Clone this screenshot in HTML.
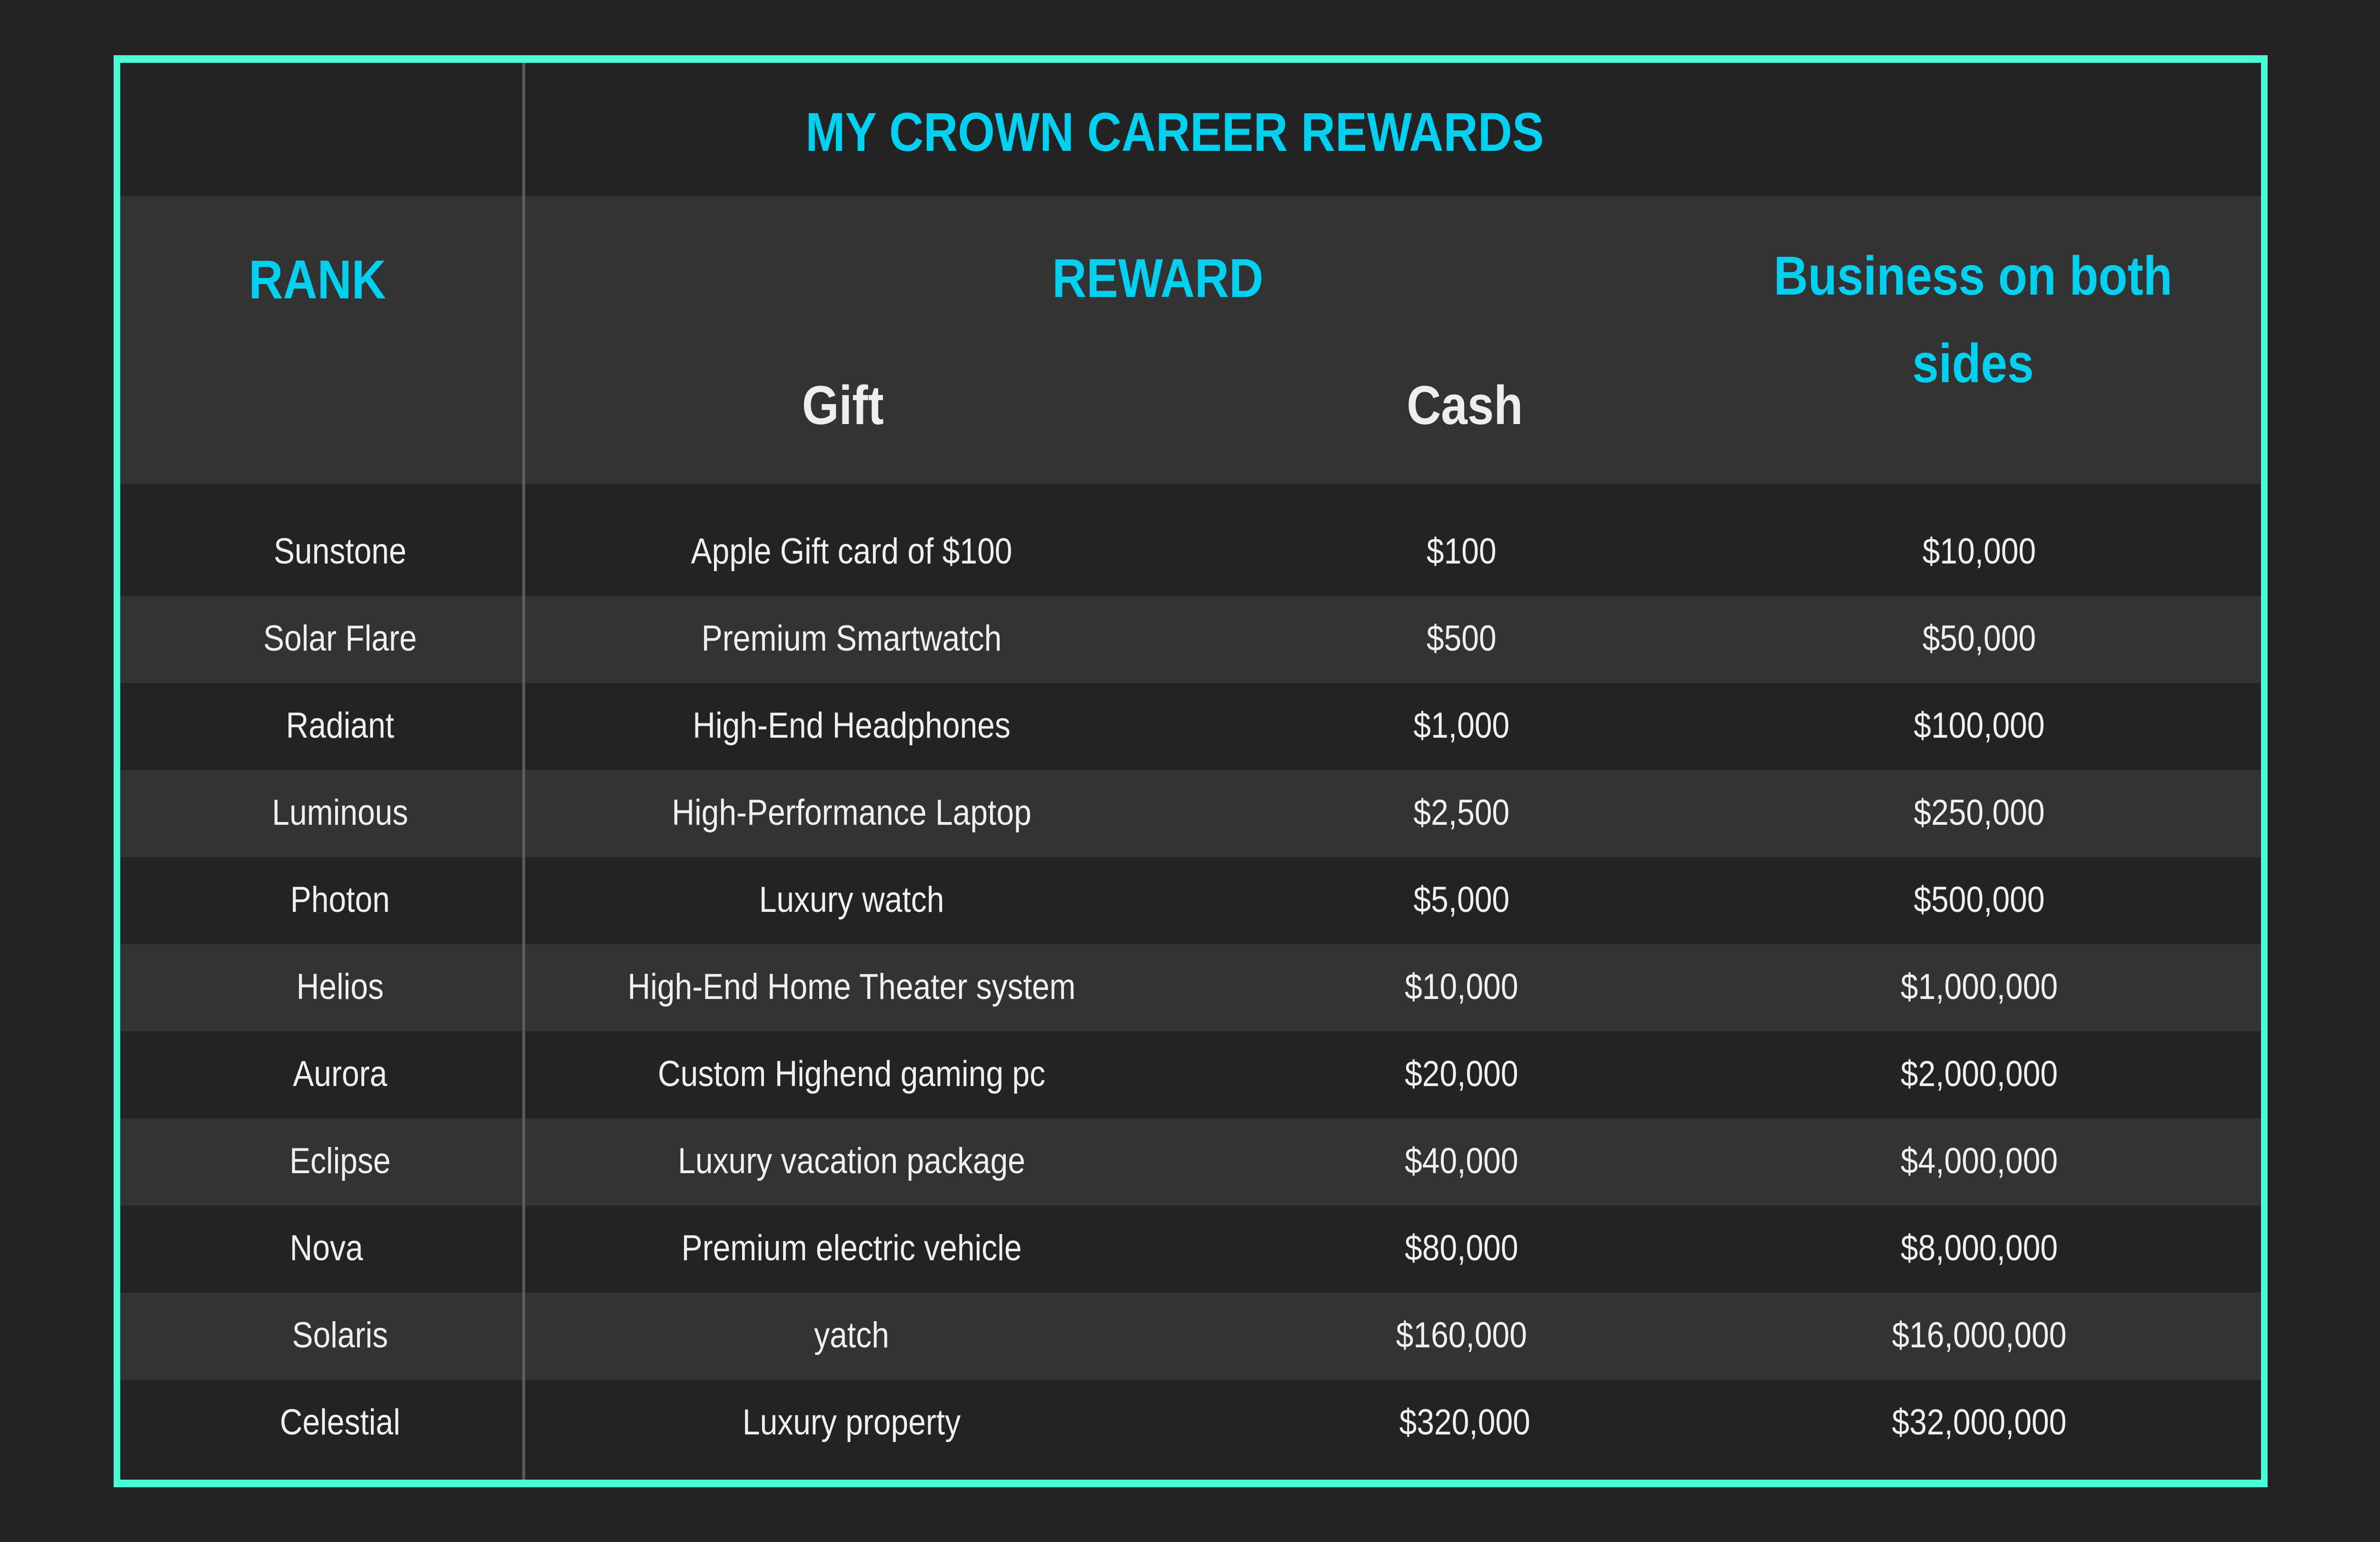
<!DOCTYPE html>
<html><head><meta charset="utf-8"><style>
html,body{margin:0;padding:0;width:100%;height:100%;overflow:hidden;background:#232323;}
#stage{width:5760px;height:3240px;position:absolute;left:0;top:0;transform-origin:0 0;overflow:hidden;background:#232323;font-family:"Liberation Sans",sans-serif;}
.box{position:absolute;left:275px;top:116px;width:5181px;height:2977px;border:16px solid #4bfdd4;background:#232323;}
.row{position:absolute;left:291px;width:5181px;}
.g{background:#333333;}
.t{position:absolute;text-align:center;white-space:nowrap;}
.h{color:#00d1f1;font-weight:bold;font-size:115px;line-height:130px;height:130px;}
.w{color:#eeeeee;font-weight:bold;font-size:115px;line-height:130px;height:130px;}
.d{color:#f0f0f0;font-size:76px;line-height:100px;height:100px;}
.div{position:absolute;left:1264px;top:132px;width:7px;height:2977px;background:#5c5c5c;}
</style></head><body>
<div id="stage">
<div class="box"></div>
<div class="row g" style="top:412px;height:605px"></div>
<div class="row g" style="top:1252px;height:183px"></div>
<div class="row g" style="top:1618px;height:183px"></div>
<div class="row g" style="top:1984px;height:183px"></div>
<div class="row g" style="top:2350px;height:183px"></div>
<div class="row g" style="top:2716px;height:183px"></div>
<div class="div"></div>

<div class="t h" style="left:1843px;width:2000px;top:213px">MY CROWN CAREER REWARDS</div>
<div class="t h" style="left:368px;width:800px;top:523px">RANK</div>
<div class="t h" style="left:2302px;width:1000px;top:520px">REWARD</div>
<div class="t h" style="left:4175px;width:1200px;top:515px">Business on both</div>
<div class="t h" style="left:4175px;width:1200px;top:699px">sides</div>
<div class="t w" style="left:1540px;width:1000px;top:787px">Gift</div>
<div class="t w" style="left:3045px;width:1000px;top:787px">Cash</div>

<div class="t d" style="left:423px;width:800px;top:1109px">Sunstone</div>
<div class="t d" style="left:1461px;width:1200px;top:1109px">Apple Gift card of $100</div>
<div class="t d" style="left:3137px;width:800px;top:1109px">$100</div>
<div class="t d" style="left:4390px;width:800px;top:1109px">$10,000</div>

<div class="t d" style="left:423px;width:800px;top:1292px">Solar Flare</div>
<div class="t d" style="left:1461px;width:1200px;top:1292px">Premium Smartwatch</div>
<div class="t d" style="left:3137px;width:800px;top:1292px">$500</div>
<div class="t d" style="left:4390px;width:800px;top:1292px">$50,000</div>

<div class="t d" style="left:423px;width:800px;top:1475px">Radiant</div>
<div class="t d" style="left:1461px;width:1200px;top:1475px">High-End Headphones</div>
<div class="t d" style="left:3137px;width:800px;top:1475px">$1,000</div>
<div class="t d" style="left:4390px;width:800px;top:1475px">$100,000</div>

<div class="t d" style="left:423px;width:800px;top:1658px">Luminous</div>
<div class="t d" style="left:1461px;width:1200px;top:1658px">High-Performance Laptop</div>
<div class="t d" style="left:3137px;width:800px;top:1658px">$2,500</div>
<div class="t d" style="left:4390px;width:800px;top:1658px">$250,000</div>

<div class="t d" style="left:423px;width:800px;top:1841px">Photon</div>
<div class="t d" style="left:1461px;width:1200px;top:1841px">Luxury watch</div>
<div class="t d" style="left:3137px;width:800px;top:1841px">$5,000</div>
<div class="t d" style="left:4390px;width:800px;top:1841px">$500,000</div>

<div class="t d" style="left:423px;width:800px;top:2024px">Helios</div>
<div class="t d" style="left:1461px;width:1200px;top:2024px">High-End Home Theater system</div>
<div class="t d" style="left:3137px;width:800px;top:2024px">$10,000</div>
<div class="t d" style="left:4390px;width:800px;top:2024px">$1,000,000</div>

<div class="t d" style="left:423px;width:800px;top:2207px">Aurora</div>
<div class="t d" style="left:1461px;width:1200px;top:2207px">Custom Highend gaming pc</div>
<div class="t d" style="left:3137px;width:800px;top:2207px">$20,000</div>
<div class="t d" style="left:4390px;width:800px;top:2207px">$2,000,000</div>

<div class="t d" style="left:423px;width:800px;top:2390px">Eclipse</div>
<div class="t d" style="left:1461px;width:1200px;top:2390px">Luxury vacation package</div>
<div class="t d" style="left:3137px;width:800px;top:2390px">$40,000</div>
<div class="t d" style="left:4390px;width:800px;top:2390px">$4,000,000</div>

<div class="t d" style="left:390px;width:800px;top:2573px">Nova</div>
<div class="t d" style="left:1461px;width:1200px;top:2573px">Premium electric vehicle</div>
<div class="t d" style="left:3137px;width:800px;top:2573px">$80,000</div>
<div class="t d" style="left:4390px;width:800px;top:2573px">$8,000,000</div>

<div class="t d" style="left:423px;width:800px;top:2756px">Solaris</div>
<div class="t d" style="left:1461px;width:1200px;top:2756px">yatch</div>
<div class="t d" style="left:3137px;width:800px;top:2756px">$160,000</div>
<div class="t d" style="left:4390px;width:800px;top:2756px">$16,000,000</div>

<div class="t d" style="left:423px;width:800px;top:2939px">Celestial</div>
<div class="t d" style="left:1461px;width:1200px;top:2939px">Luxury property</div>
<div class="t d" style="left:3145px;width:800px;top:2939px">$320,000</div>
<div class="t d" style="left:4390px;width:800px;top:2939px">$32,000,000</div>
</div>
<script>
(function(){
  function fit(){
    var w=window.innerWidth||document.documentElement.clientWidth||5760;
    var h=window.innerHeight||document.documentElement.clientHeight||3240;
    var s=document.getElementById('stage');
    s.style.transform='scale('+(w/5760)+','+(h/3240)+')';
  }
  fit();
  window.addEventListener('resize',fit);
})();
</script>
</body></html>
